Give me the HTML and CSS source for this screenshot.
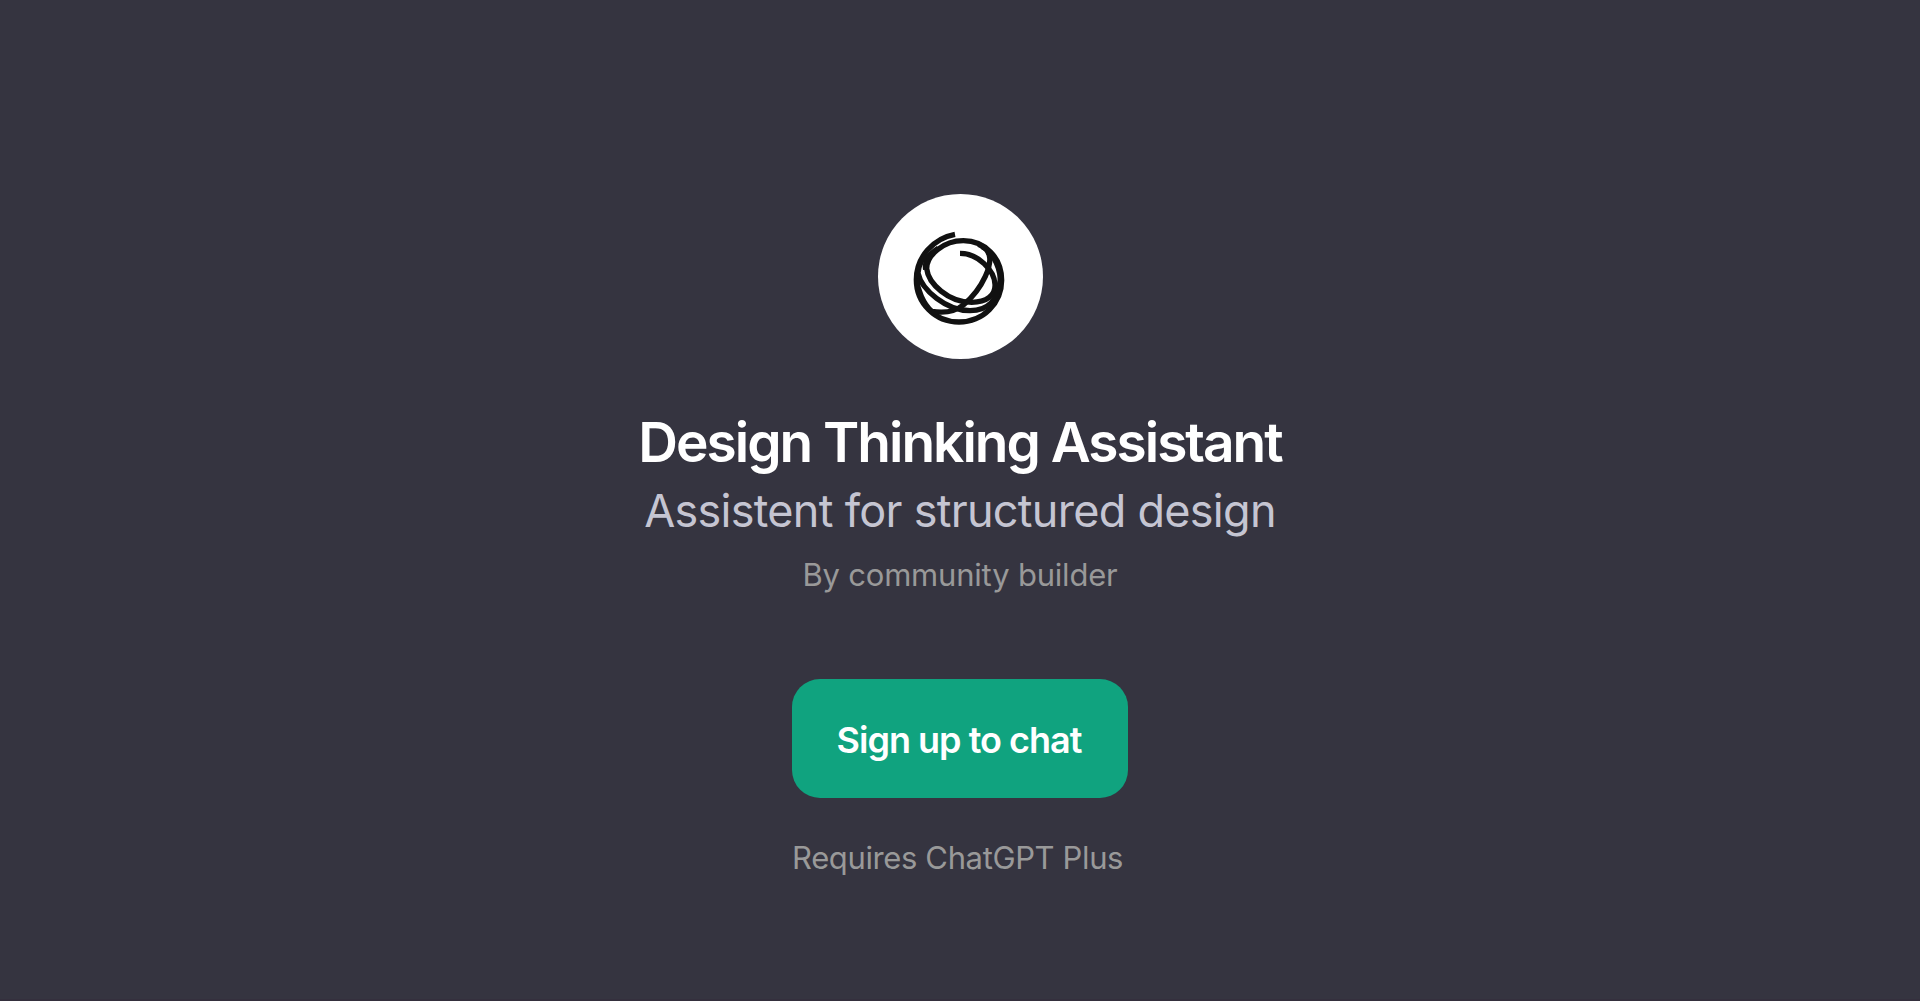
FILE: index.html
```
<!DOCTYPE html>
<html lang="en">
<head>
    <meta charset="UTF-8">
    <meta name="viewport" content="width=device-width, initial-scale=1.0">
    <title>Design Thinking Assistant</title>
    <link rel="stylesheet" href="styles.css">
</head>
<body>

    <main class="page">
        <div class="avatar">
            <svg viewBox="0 0 540 540" aria-hidden="true">
                <path d="M255 142C190 154 139 210 139 278C139 348 195 405 267 405C340 405 395 348 395 280C395 212 345 161 280 161C220 161 170 205 170 245C175 290 235 346 305 346C350 346 377 325 375 292C373 250 325 199 270 199"/>
                <path d="M205 184C172 205 163 222 167 248"/>
                <path d="M172 200C156 215 146 235 144 258C155 310 230 371 300 371C355 371 386 335 391 275"/>
                <path d="M325 172C370 190 364 228 346 268C330 303 305 333 280 354C250 378 215 378 185 373C160 350 143 310 140 275"/>
                <path d="M335 178C362 190 388 230 391 276"/>
            </svg>
        </div>

        <h1 class="title">Design Thinking Assistant</h1>
        <p class="subtitle">Assistent for structured design</p>
        <p class="author">By community builder</p>

        <div class="actions">
            <button class="signup">Sign up to chat</button>
            <p class="note">Requires ChatGPT Plus</p>
        </div>
    </main>

</body>
</html>
```

FILE: styles.css
```
body {
    margin: 0;
    background-color: #353440;
    font-family: Inter, "Liberation Sans", sans-serif;
}
h1, p {
    margin: 0;
    white-space: nowrap;
}
.page {
    box-sizing: border-box;
    height: 1001px;
    padding-top: 194px;
    border-bottom: 2px solid #342f3d;
    display: flex;
    flex-direction: column;
    align-items: center;
}
.avatar {
    width: 165px;
    height: 165px;
    border-radius: 50%;
    background-color: #fff;
    display: flex;
    align-items: center;
    justify-content: center;
}
.avatar svg {
    width: 180px;
    height: 180px;
    flex: none;
    fill: none;
    stroke: #111;
    stroke-width: 16;
}
.title {
    margin-top: 50px;
    font-size: 55px;
    line-height: 66px;
    font-weight: 600;
    letter-spacing: -2px;
    color: #fff;
}
.subtitle {
    margin-top: 8px;
    font-size: 45px;
    line-height: 56px;
    letter-spacing: -0.72px;
    color: #c5c5d2;
}
.author {
    margin-top: 16px;
    font-size: 31px;
    line-height: 40px;
    letter-spacing: -0.2px;
    color: #999;
}
.actions {
    width: 336px;
    margin-top: 84px;
}
.signup {
    width: 336px;
    height: 119px;
    padding: 2px 2px 0 0;
    border: none;
    border-radius: 28px;
    background-color: #10a37f;
    color: #fff;
    font-family: inherit;
    font-size: 36px;
    font-weight: 600;
    letter-spacing: -1px;
    cursor: pointer;
    display: block;
    white-space: nowrap;
}
.note {
    margin-top: 40px;
    font-size: 31px;
    line-height: 40px;
    letter-spacing: -0.37px;
    color: #999;
}
```
